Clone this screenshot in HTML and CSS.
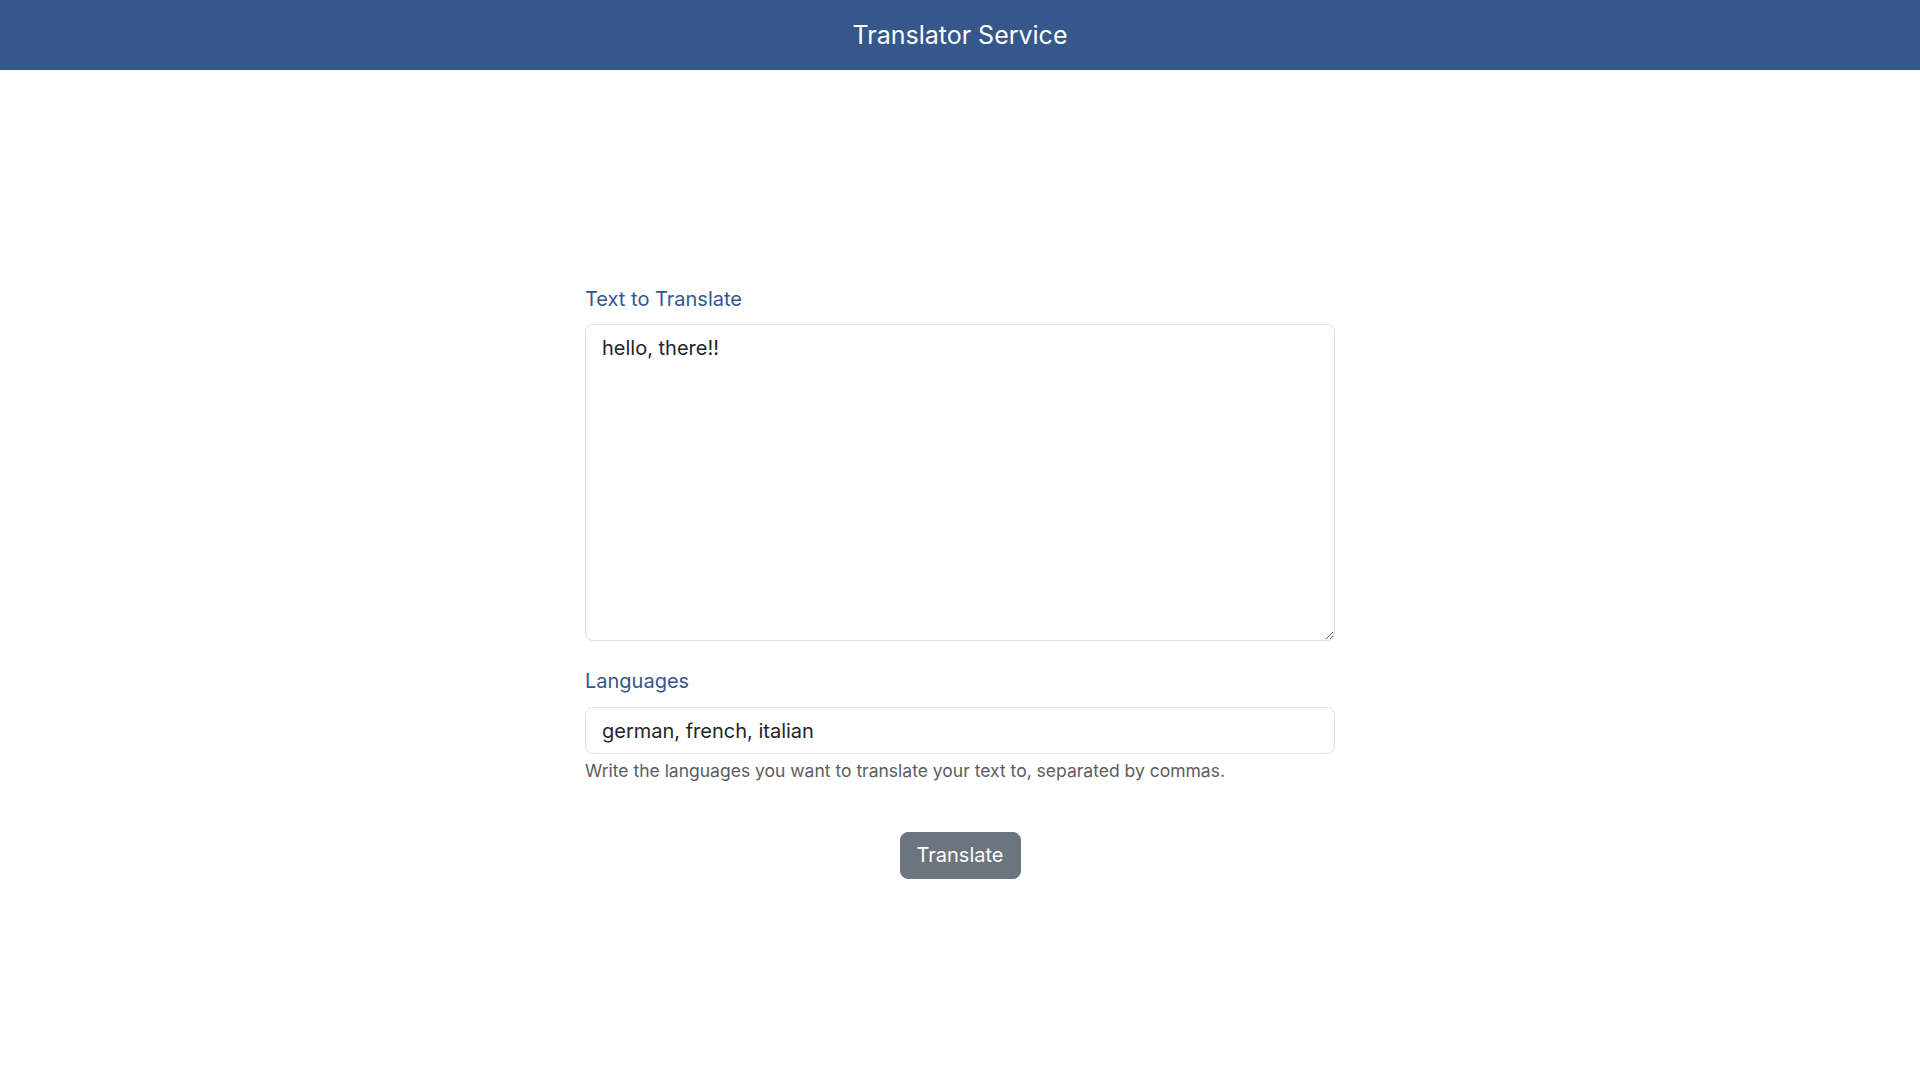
FILE: index.html
```html
<!DOCTYPE html>
<html lang="en">
<head>
<meta charset="utf-8">
<title>Translator Service</title>
<link rel="stylesheet" href="styles.css">
</head>
<body>
<header class="topbar">
  <h1 class="topbar-title">Translator Service</h1>
</header>
<main class="page">
  <form class="form">
    <div class="field field-text">
      <label class="form-label" for="text">Text to Translate</label>
      <textarea id="text" class="control control-area">hello, there!!</textarea>
    </div>
    <div class="field field-langs">
      <label class="form-label" for="langs">Languages</label>
      <input id="langs" class="control control-input" type="text" value="german, french, italian">
      <div class="form-text">Write the languages you want to translate your text to, separated by commas.</div>
    </div>
    <div class="actions">
      <button type="button" class="btn">Translate</button>
    </div>
  </form>
</main>
</body>
</html>
```
FILE: styles.css
```css
* { box-sizing: border-box; }
html, body { margin: 0; padding: 0; }
body {
  font-family: Inter, "Noto Sans", sans-serif;
  color: #212529;
  background: #ffffff;
  font-size: 16px;
  line-height: 1.5;
}
.topbar {
  height: 70px;
  background: #35578b;
  display: flex;
  align-items: center;
  justify-content: center;
}
.topbar-title {
  margin: 0;
  color: #ffffff;
  font-size: 25px;
  font-weight: 400;
  line-height: 1.2;
}
.page {
  padding-top: 214px;
}
.form {
  width: 750px;
  margin: 0 auto;
  display: flex;
  flex-direction: column;
}
.form-label {
  display: block;
  font-size: 20px;
  line-height: 30px;
  color: #34578f;
  margin-bottom: 10px;
}
.field-langs .form-label { margin-bottom: 11px; }
.field-text { margin-bottom: 25px; }
.control {
  display: block;
  width: 100%;
  font-family: Inter, "Noto Sans", sans-serif;
  font-size: 20px;
  line-height: 30px;
  color: #212529;
  background: #ffffff;
  border: 1px solid #dee2e6;
  border-radius: 8px;
  padding: 8px 16px;
  outline: none;
}
.control-area {
  height: 317px;
  resize: vertical;
}
.control-input {
  height: 47px;
}
.form-text {
  margin-top: 4px;
  font-size: 17.5px;
  line-height: 26px;
  color: #5a5d61;
}
.actions {
  display: flex;
  justify-content: center;
  margin-top: 48px;
}
.btn {
  font-family: Inter, "Noto Sans", sans-serif;
  font-size: 20px;
  line-height: 29px;
  color: #ffffff;
  background: #6c757d;
  border: 1px solid #6c757d;
  border-radius: 8px;
  padding: 8px 16px;
  height: 47px;
  cursor: pointer;
}
```
